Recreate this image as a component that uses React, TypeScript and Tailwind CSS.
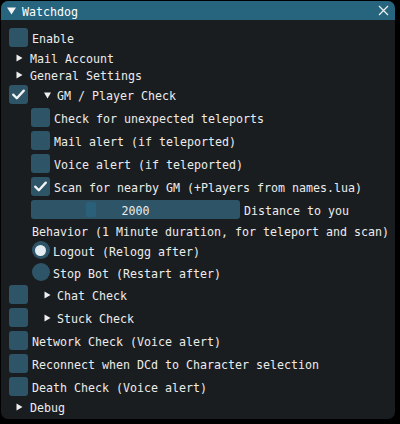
import React from 'react';

const mono = { fontFamily: '"DejaVu Sans Mono", "Liberation Mono", monospace' };

// text sits a little lower in the line than the font's own metrics put it
const lbl = 'whitespace-pre pt-[4px]';

const Check = () => (
  <svg width="19" height="19" viewBox="0 0 19 19" className="absolute left-0 top-0">
    <path d="M4.2 9.6 L7.8 13.2 L14.8 5.6" fill="none" stroke="#f2f4f5" strokeWidth="2.3" strokeLinecap="round" strokeLinejoin="round" />
  </svg>
);

const Box = ({ checked = false }: { checked?: boolean }) => (
  <div className="relative w-[19px] h-[19px] shrink-0 rounded-[3px] bg-[#2e5567]">{checked && <Check />}</div>
);

const Radio = ({ on = false }: { on?: boolean }) => (
  <div className="w-[19px] h-[18px] shrink-0 flex items-center justify-center">
    <div className="w-[18px] h-[18px] rounded-full bg-[#2e5567] flex items-center justify-center">
      {on && <div className="w-[11px] h-[11px] rounded-full bg-[#e4edf2]" />}
    </div>
  </div>
);

const ArrowRight = () => (
  <svg width="7" height="8" viewBox="0 0 7 8" className="shrink-0">
    <path d="M0.5 0.5 L6.5 4 L0.5 7.5 Z" fill="#eeeeee" />
  </svg>
);

const ArrowDown = () => (
  <svg width="7" height="7" viewBox="0 0 7 7" className="shrink-0">
    <path d="M0 0.5 L7 0.5 L3.5 6.5 Z" fill="#eeeeee" />
  </svg>
);

const CheckRow = ({ label, checked = false, indent = false }: { label: string; checked?: boolean; indent?: boolean }) => (
  <div className={`flex items-center gap-[4px] h-[19px] ${indent ? 'ml-[22px]' : ''}`}>
    <Box checked={checked} />
    <span className={lbl}>{label}</span>
  </div>
);

const Node = ({ label, open = false }: { label: string; open?: boolean }) => (
  <div className="flex items-center h-[13px]">
    <div className="w-[21px] flex items-center pl-[7px] pt-[1px]">{open ? <ArrowDown /> : <ArrowRight />}</div>
    <span className={lbl}>{label}</span>
  </div>
);

const BoxNode = ({ label, checked = false, open = false }: { label: string; checked?: boolean; open?: boolean }) => (
  <div className="flex items-center h-[19px]">
    <Box checked={checked} />
    <div className="w-[29px] flex items-center pl-[16px] pt-[1px]">{open ? <ArrowDown /> : <ArrowRight />}</div>
    <span className={lbl}>{label}</span>
  </div>
);

const RadioRow = ({ label, on = false }: { label: string; on?: boolean }) => (
  <div className="flex items-center gap-[3px] h-[18px] ml-[22px]">
    <Radio on={on} />
    <span className={lbl}>{label}</span>
  </div>
);

export default function App() {
  return (
    <div className="w-[400px] h-[424px] bg-black pl-[1px] pt-[1px]" style={mono}>
      <div className="w-[394px] h-[418px] rounded-[7px] bg-[#1a1d20] overflow-hidden flex flex-col text-[11.63px] leading-[13px] text-[#ececec]">
        <div className="h-[19px] shrink-0 bg-[#27647e] flex items-center pl-[6px] pr-[4px]">
          <svg width="9" height="8" viewBox="0 0 9 8" className="shrink-0">
            <path d="M0 0.5 L9 0.5 L4.5 7.5 Z" fill="#f4f4f4" />
          </svg>
          <span className="ml-[6px] text-white flex-1 pt-[3px]">Watchdog</span>
          <svg width="11" height="11" viewBox="0 0 11 11" className="mr-[2px]">
            <path d="M1 1 L10 10 M10 1 L1 10" stroke="#eef3f5" strokeWidth="1.2" />
          </svg>
        </div>
        <div className="flex flex-col gap-[4px] pl-[8px] pt-[8px]">
          <CheckRow label="Enable" />
          <Node label="Mail Account" />
          <Node label="General Settings" />
          <BoxNode label="GM / Player Check" checked open />
          <CheckRow label="Check for unexpected teleports" indent />
          <CheckRow label="Mail alert (if teleported)" indent />
          <CheckRow label="Voice alert (if teleported)" indent />
          <CheckRow label="Scan for nearby GM (+Players from names.lua)" checked indent />
          <div className="flex items-center gap-[4px] h-[19px] ml-[22px]">
            <div className="relative w-[209px] h-[19px] rounded-[3px] bg-[#2e5567] flex items-center justify-center">
              <div className="absolute left-[55px] top-[2px] w-[10px] h-[15px] rounded-[2px] bg-[#2a6079]" />
              <span className="relative pt-[3px]">2000</span>
            </div>
            <span className={lbl}>Distance to you</span>
          </div>
          <div className="flex items-center h-[13px] ml-[23px] mt-[1px]">
            <span className={lbl}>Behavior (1 Minute duration, for teleport and scan)</span>
          </div>
          <RadioRow label="Logout (Relogg after)" on />
          <RadioRow label="Stop Bot (Restart after)" />
          <BoxNode label="Chat Check" />
          <BoxNode label="Stuck Check" />
          <CheckRow label="Network Check (Voice alert)" />
          <CheckRow label="Reconnect when DCd to Character selection" />
          <CheckRow label="Death Check (Voice alert)" />
          <Node label="Debug" />
        </div>
      </div>
    </div>
  );
}
